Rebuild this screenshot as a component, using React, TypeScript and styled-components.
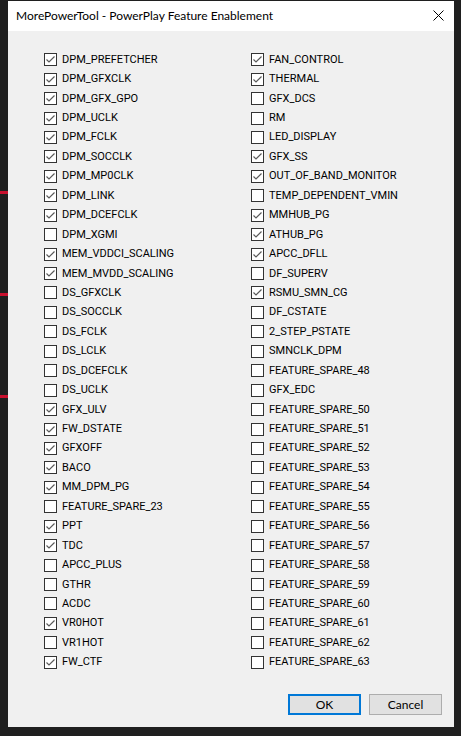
import React from "react";
import styled, { createGlobalStyle } from "styled-components";

const Global = createGlobalStyle`
  html, body { margin: 0; padding: 0; background: #1f1f1f; }
  body { width: 461px; height: 736px; overflow: hidden; }
  * { box-sizing: border-box; }
`;

const Desktop = styled.div`
  position: relative;
  width: 461px;
  height: 736px;
  padding: 1px 7px 0 8px;
  background: #1f1f1f;
`;

const Marker = styled.div<{ $top: number }>`
  position: absolute;
  left: 0;
  top: ${(p) => p.$top}px;
  width: 8px;
  height: 3px;
  background: #c8102e;
`;

const Window = styled.div`
  width: 446px;
  height: 726px;
  background: #f0f0f0;
  display: flex;
  flex-direction: column;
  font-family: Lato, "Noto Sans", sans-serif;
  font-size: 12px;
  color: #000;
`;

const TitleBar = styled.div`
  height: 30px;
  background: #fff;
  display: flex;
  align-items: center;
  justify-content: space-between;
  padding: 0 10px 0 8px;
`;

const Title = styled.span`
  font-size: 12px;
  line-height: 16px;
  color: #000;
`;

const Close = styled.svg`
  width: 11px;
  height: 11px;
  margin-top: -1px;
`;

const Body = styled.div`
  flex: 1;
  display: flex;
  flex-direction: column;
  padding: 19px 12px 12px 36px;
`;

const Grid = styled.div`
  display: grid;
  grid-template-columns: 207px 1fr;
  grid-template-rows: repeat(32, 19.45px);
  grid-auto-flow: column;
`;

const Row = styled.label`
  display: flex;
  align-items: center;
  gap: 5px;
  white-space: nowrap;
`;

const Box = styled.span`
  width: 13px;
  height: 13px;
  flex: none;
  border: 1px solid #333;
  background: #fff;
  display: flex;
  align-items: center;
  justify-content: center;
`;

const Text = styled.span`
  font-family: Roboto, "Noto Sans", sans-serif;
  font-size: 11px;
  line-height: 16px;
`;

const Footer = styled.div`
  margin-top: auto;
  display: flex;
  justify-content: flex-end;
  gap: 8px;
`;

const Button = styled.button<{ $primary?: boolean }>`
  width: 73px;
  height: 21px;
  padding: 0;
  font-family: inherit;
  font-size: 12px;
  color: #000;
  background: #e1e1e1;
  border: ${(p) => (p.$primary ? "2px solid #0078d7" : "1px solid #adadad")};
`;

type Item = [string, boolean];

const left: Item[] = [
  ["DPM_PREFETCHER", true],
  ["DPM_GFXCLK", true],
  ["DPM_GFX_GPO", true],
  ["DPM_UCLK", true],
  ["DPM_FCLK", true],
  ["DPM_SOCCLK", true],
  ["DPM_MP0CLK", true],
  ["DPM_LINK", true],
  ["DPM_DCEFCLK", true],
  ["DPM_XGMI", false],
  ["MEM_VDDCI_SCALING", true],
  ["MEM_MVDD_SCALING", true],
  ["DS_GFXCLK", false],
  ["DS_SOCCLK", false],
  ["DS_FCLK", false],
  ["DS_LCLK", false],
  ["DS_DCEFCLK", false],
  ["DS_UCLK", false],
  ["GFX_ULV", true],
  ["FW_DSTATE", true],
  ["GFXOFF", true],
  ["BACO", true],
  ["MM_DPM_PG", true],
  ["FEATURE_SPARE_23", false],
  ["PPT", true],
  ["TDC", true],
  ["APCC_PLUS", false],
  ["GTHR", false],
  ["ACDC", false],
  ["VR0HOT", true],
  ["VR1HOT", false],
  ["FW_CTF", true],
];

const right: Item[] = [
  ["FAN_CONTROL", true],
  ["THERMAL", true],
  ["GFX_DCS", false],
  ["RM", false],
  ["LED_DISPLAY", false],
  ["GFX_SS", true],
  ["OUT_OF_BAND_MONITOR", true],
  ["TEMP_DEPENDENT_VMIN", false],
  ["MMHUB_PG", true],
  ["ATHUB_PG", true],
  ["APCC_DFLL", true],
  ["DF_SUPERV", false],
  ["RSMU_SMN_CG", true],
  ["DF_CSTATE", false],
  ["2_STEP_PSTATE", false],
  ["SMNCLK_DPM", false],
  ["FEATURE_SPARE_48", false],
  ["GFX_EDC", false],
  ...Array.from({ length: 14 }, (_, i) => [`FEATURE_SPARE_${50 + i}`, false] as Item),
];

const Check = () => (
  <svg width="11" height="11" viewBox="0 0 11 11">
    <polyline points="1.5,5.5 4,8 9.5,2.5" fill="none" stroke="#5a5a5a" strokeWidth="1.2" />
  </svg>
);

export default function App() {
  return (
    <>
      <Global />
      <Desktop>
        <Marker $top={191} />
        <Marker $top={293} />
        <Marker $top={395} />
        <Window>
          <TitleBar>
            <Title>MorePowerTool - PowerPlay Feature Enablement</Title>
            <Close viewBox="0 0 11 11">
              <path d="M0.5 0.5 L10.5 10.5 M10.5 0.5 L0.5 10.5" stroke="#000" strokeWidth="1" />
            </Close>
          </TitleBar>
          <Body>
            <Grid>
              {[...left, ...right].map(([name, on]) => (
                <Row key={name}>
                  <Box>{on && <Check />}</Box>
                  <Text>{name}</Text>
                </Row>
              ))}
            </Grid>
            <Footer>
              <Button $primary>OK</Button>
              <Button>Cancel</Button>
            </Footer>
          </Body>
        </Window>
      </Desktop>
    </>
  );
}
